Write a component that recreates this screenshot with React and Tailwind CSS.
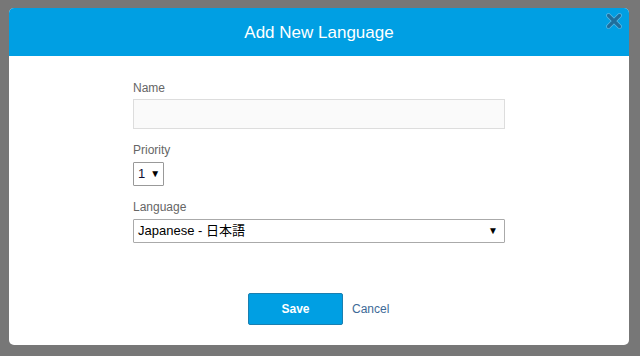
function CloseIcon() {
  return (
    <svg width="16" height="16" viewBox="0 0 16 16" className="absolute right-[7px] top-[5px]">
      <path d="M2.5 2.5 L13.5 13.5 M13.5 2.5 L2.5 13.5" stroke="#5ab8e6" strokeWidth="4.6" strokeLinecap="round" />
      <path d="M2.5 2.5 L13.5 13.5 M13.5 2.5 L2.5 13.5" stroke="#1f6e9c" strokeWidth="3.2" strokeLinecap="round" />
    </svg>
  );
}

function Caret() {
  return <span className="text-[10px] leading-none text-black">▼</span>;
}

export default function App() {
  return (
    <div
      className="w-[640px] h-[356px] bg-[#777777] pt-[8px] pl-[9px]"
      style={{ fontFamily: '"Liberation Sans", Arial, "Noto Sans CJK JP", sans-serif' }}
    >
      <div className="w-[620px] h-[337px] bg-white rounded-[5px] flex flex-col">
        <div className="relative h-[48px] bg-[#009fe3] rounded-t-[5px] flex items-center justify-center">
          <h2 className="text-white text-[17px] leading-none">Add New Language</h2>
          <CloseIcon />
        </div>

        <div className="flex-1 flex flex-col pl-[124px] pt-[24px]">
          <div className="w-[372px] flex flex-col">
            <label className="text-[12px] leading-[16px] text-[#666666]">Name</label>
            <div className="mt-[3px] h-[30px] border border-[#dddddd] bg-[#fafafa]"></div>

            <label className="mt-[13px] text-[12px] leading-[16px] text-[#666666]">Priority</label>
            <div className="mt-[4px] w-[31px] h-[24px] border border-[#999999] rounded-[1px] flex items-center gap-[5px] pl-[4px]">
              <span className="text-[13px] text-[#111133]">1</span>
              <Caret />
            </div>

            <label className="mt-[13px] text-[12px] leading-[16px] text-[#666666]">Language</label>
            <div className="mt-[4px] h-[24px] border border-[#aaaaaa] rounded-[1px] flex items-center justify-between pl-[4px] pr-[6px]">
              <span className="text-[13px] text-black">Japanese - 日本語</span>
              <Caret />
            </div>
          </div>

          <div className="mt-[50px] ml-[115px] flex items-center gap-[9px]">
            <button className="w-[95px] h-[32px] bg-[#009fe3] border border-[#1a7fb0] rounded-[2px] text-white text-[12px] font-bold">
              Save
            </button>
            <span className="text-[12px] text-[#3d6a97]">Cancel</span>
          </div>
        </div>
      </div>
    </div>
  );
}
